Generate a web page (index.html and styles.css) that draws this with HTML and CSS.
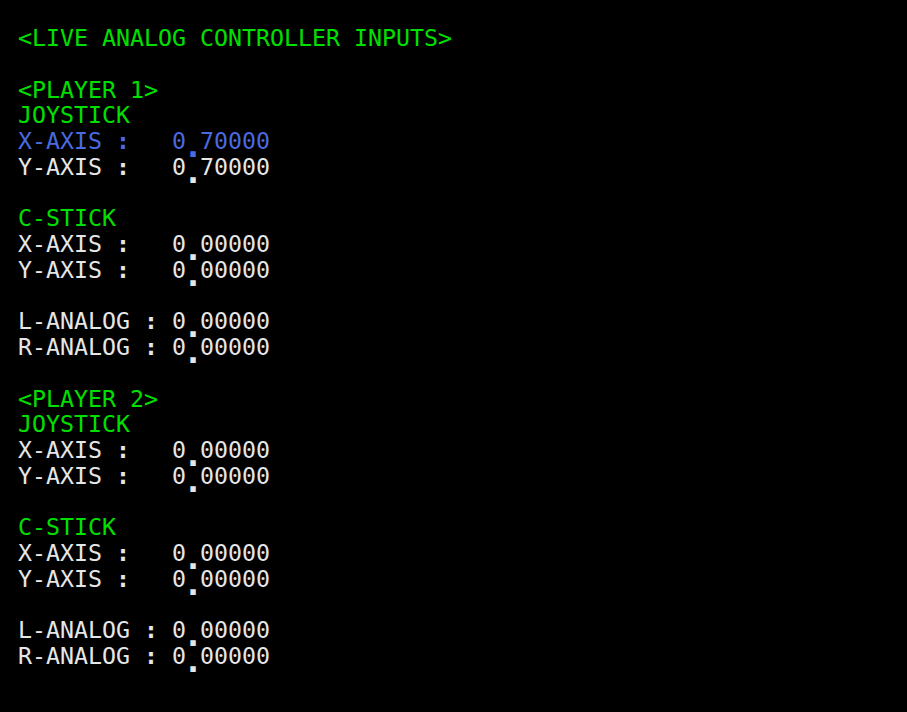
FILE: index.html
```html
<!DOCTYPE html>
<html>
<head>
<meta charset="utf-8">
<title>Live Analog Controller Inputs</title>
<link rel="stylesheet" href="styles.css">
</head>
<body>
<main class="screen">
  <div class="line green">&lt;LIVE ANALOG CONTROLLER INPUTS&gt;</div>
  <div class="line"></div>

  <div class="line green">&lt;PLAYER 1&gt;</div>
  <div class="line green">JOYSTICK</div>
  <div class="line blue">X-AXIS <span class="col">:</span>   0<span class="pt">.</span>70000</div>
  <div class="line white">Y-AXIS <span class="col">:</span>   0<span class="pt">.</span>70000</div>
  <div class="line"></div>
  <div class="line green">C-STICK</div>
  <div class="line white">X-AXIS <span class="col">:</span>   0<span class="pt">.</span>00000</div>
  <div class="line white">Y-AXIS <span class="col">:</span>   0<span class="pt">.</span>00000</div>
  <div class="line"></div>
  <div class="line white">L-ANALOG <span class="col">:</span> 0<span class="pt">.</span>00000</div>
  <div class="line white">R-ANALOG <span class="col">:</span> 0<span class="pt">.</span>00000</div>
  <div class="line"></div>

  <div class="line green">&lt;PLAYER 2&gt;</div>
  <div class="line green">JOYSTICK</div>
  <div class="line white">X-AXIS <span class="col">:</span>   0<span class="pt">.</span>00000</div>
  <div class="line white">Y-AXIS <span class="col">:</span>   0<span class="pt">.</span>00000</div>
  <div class="line"></div>
  <div class="line green">C-STICK</div>
  <div class="line white">X-AXIS <span class="col">:</span>   0<span class="pt">.</span>00000</div>
  <div class="line white">Y-AXIS <span class="col">:</span>   0<span class="pt">.</span>00000</div>
  <div class="line"></div>
  <div class="line white">L-ANALOG <span class="col">:</span> 0<span class="pt">.</span>00000</div>
  <div class="line white">R-ANALOG <span class="col">:</span> 0<span class="pt">.</span>00000</div>
</main>
</body>
</html>
```

FILE: styles.css
```css
html, body {
  margin: 0;
  padding: 0;
  background: #000;
  height: 100%;
}

.screen {
  padding: 25px 0 0 18px;
  font-family: "DejaVu Sans Mono", "Liberation Mono", monospace;
  font-size: 23.25px;
  line-height: 25.75px;
  color: #e6e6e6;
}

.line {
  height: 25.75px;
  white-space: pre;
}

.green { color: #00e000; }
.white { color: #e6e6e6; }
.blue  { color: #4a6ae0; }

.col {
  font-weight: bold;
}

.pt {
  display: inline-block;
  font-weight: bold;
  transform: translateY(5px) scale(1.4);
}
```
